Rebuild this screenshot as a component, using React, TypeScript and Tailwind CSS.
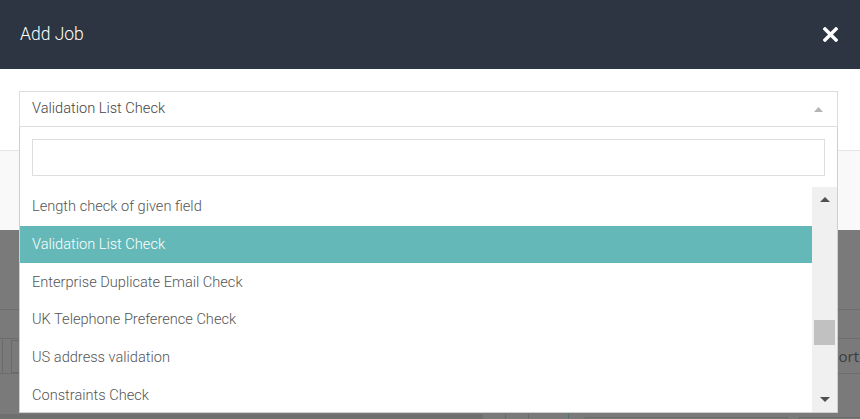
import React from "react";

const options = [
  "Length check of given field",
  "Validation List Check",
  "Enterprise Duplicate Email Check",
  "UK Telephone Preference Check",
  "US address validation",
  "Constraints Check",
];

export default function App() {
  return (
    <div className="relative w-[860px] h-[419px] overflow-hidden bg-[#7a7a7a] font-['Roboto',sans-serif]">
      {/* Modal */}
      <div className="flex flex-col">
        <div className="h-[69px] bg-[#2c3541] flex items-center justify-between pl-5 pr-[22px]">
          <span className="text-white text-[17.5px] font-light leading-none">Add Job</span>
          <svg width="15" height="15" viewBox="0 0 15 15" className="block">
            <path d="M2 2 L13 13 M13 2 L2 13" stroke="#ffffff" strokeWidth="3.4" strokeLinecap="square" />
          </svg>
        </div>
        <div className="h-[81px] bg-white px-[19px] pt-[22px]">
          <div className="relative w-[819px]">
            <div className="h-[36px] border border-[#dddddd] flex items-center justify-between pl-3 pr-[14px]">
              <span className="text-[14.6px] font-light text-[#444444]">Validation List Check</span>
              <svg width="9" height="5" viewBox="0 0 9 5" className="block">
                <path d="M0 5 L4.5 0 L9 5 Z" fill="#b4b4b4" />
              </svg>
            </div>
            {/* Dropdown panel */}
            <div className="absolute left-0 top-full w-[819px] z-10 bg-white border-x border-b border-[#cfcfcf]">
              <div className="px-3 pt-3">
                <div className="h-[37px] border border-[#dddddd]" />
              </div>
              <div className="mt-3 h-[224px] flex">
                <div className="flex-1 flex flex-col overflow-hidden">
                  {options.map((o, i) => (
                    <div
                      key={o}
                      className={
                        i === 1
                          ? "h-[37.7px] shrink-0 flex items-center pl-3 pt-px text-[14.6px] font-light bg-[#64b8b8] text-white"
                          : "h-[37.7px] shrink-0 flex items-center pl-3 pt-px text-[14.6px] font-light text-[#555555]"
                      }
                    >
                      {o}
                    </div>
                  ))}
                </div>
                <div className="w-[25px] -mt-px bg-[#f0f0f0] flex flex-col">
                  <div className="h-[25px] flex items-center justify-center">
                    <svg width="10" height="5" viewBox="0 0 10 5" className="block">
                      <path d="M0 5 L5 0 L10 5 Z" fill="#505050" />
                    </svg>
                  </div>
                  <div className="flex-1">
                    <div className="mt-[108px] mx-[2px] h-[25px] bg-[#c1c1c1]" />
                  </div>
                  <div className="h-[25px] flex items-center justify-center">
                    <svg width="10" height="5" viewBox="0 0 10 5" className="block">
                      <path d="M0 0 L10 0 L5 5 Z" fill="#505050" />
                    </svg>
                  </div>
                </div>
              </div>
            </div>
          </div>
        </div>
        <div className="h-[80px] bg-[#f9f9f9] border-t border-[#e6e6e6]" />
      </div>

      {/* Background page under overlay */}
      <div className="flex flex-col">
        <div className="h-[79px]" />
        <div className="h-[29px] border-t border-[#6d6d6d]" />
        <div className="h-[36px] border-t border-b border-[#6d6d6d] flex items-center">
          <div className="w-[3px] h-[33px] border-r border-[#6a6a6a]" />
          <div className="ml-[8px] w-[40px] h-[33px] border border-[#6a6a6a]" />
          <div className="flex-1" />
          <span className="text-[15px] text-[#3c3c3c] mr-[1px] font-['Open_Sans',sans-serif]">Import</span>
        </div>
        <div className="h-[40px]" />
        <div className="h-[8px] flex">
          <div className="w-[483px] bg-[#6f6f6f]" />
          <div className="w-[23px] border-r border-[#6a6a6a]" />
          <div className="w-[23px] border-r border-[#6a6a6a]" />
          <div className="w-[40px] border-r border-[#4f7373]" />
          <div className="ml-[16px] mt-[3px] w-[203px] border-t border-x border-[#6a6a6a]" />
          <div className="ml-[11px] mt-[3px] flex-1 border-t border-l border-[#6a6a6a]" />
        </div>
      </div>
    </div>
  );
}
